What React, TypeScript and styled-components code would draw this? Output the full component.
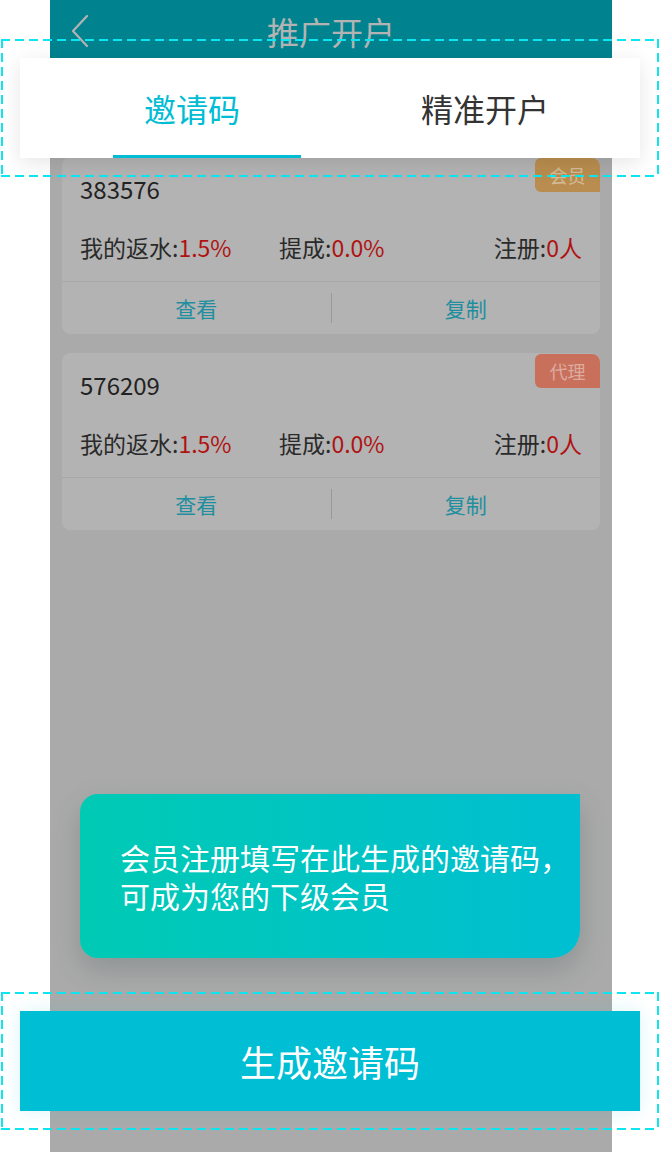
import React from "react";
import styled, { createGlobalStyle } from "styled-components";

const GlobalStyle = createGlobalStyle`
  html, body { margin: 0; padding: 0; background: #ffffff; }
  body { font-family: "Noto Sans CJK SC", "Noto Sans", sans-serif; }
  * { box-sizing: border-box; }
`;

const DASH = "#0de6f0";

const Stage = styled.div`
  position: relative;
  width: 660px;
  height: 1152px;
  overflow: hidden;
  background: #ffffff;
`;

const Screen = styled.div`
  margin-left: 50px;
  width: 562px;
  height: 100%;
  background: #aaaaaa;
  display: flex;
  flex-direction: column;
`;

const Header = styled.header`
  flex: none;
  height: 58px;
  padding-top: 3px;
  background: #00838f;
  display: grid;
  grid-template-columns: 1fr auto 1fr;
  align-items: center;
`;

const BackButton = styled.button`
  justify-self: start;
  margin-left: 20px;
  padding: 0;
  border: 0;
  background: none;
  width: 20px;
  height: 34px;
  display: flex;
`;

const Title = styled.h1`
  margin: 0;
  font-size: 32px;
  font-weight: 400;
  line-height: 52px;
  color: #b3b3b3;
`;

const CardList = styled.main`
  margin-top: 99px;
  padding: 0 12px;
  display: flex;
  flex-direction: column;
  gap: 19px;
`;

const Card = styled.article`
  position: relative;
  background: #b3b3b3;
  border-radius: 8px;
  overflow: hidden;
`;

const Badge = styled.span<{ $tone: "member" | "agent" }>`
  position: absolute;
  top: 1px;
  right: 0;
  width: 65px;
  height: 34px;
  border-radius: 6px 8px 0 6px;
  background: ${(p) => (p.$tone === "member" ? "#b98d4f" : "#c8705c")};
  color: rgba(255, 255, 255, 0.42);
  font-size: 18px;
  line-height: 34px;
  text-align: center;
`;

const CardInfo = styled.div`
  padding: 17px 18px 19px;
  display: flex;
  flex-direction: column;
  gap: 28px;
`;

const Code = styled.div`
  font-size: 24px;
  line-height: 30px;
  color: #222222;
`;

const Stats = styled.div`
  display: flex;
  font-size: 23px;
  line-height: 30px;
  color: #2a2a2a;
`;

const Stat = styled.span<{ $width?: number; $end?: boolean }>`
  flex: ${(p) => (p.$width ? `0 0 ${p.$width}px` : "none")};
  margin-left: ${(p) => (p.$end ? "auto" : "0")};
  white-space: nowrap;
`;

const Value = styled.span`
  color: #b01212;
`;

const Actions = styled.div`
  height: 53px;
  border-top: 1px solid #a8a8a8;
  display: grid;
  grid-template-columns: 1fr 1px 1fr;
  align-items: center;
`;

const ActionButton = styled.button`
  padding: 0;
  border: 0;
  background: none;
  font-family: inherit;
  font-size: 21px;
  color: #1f8e9e;
  text-align: center;
`;

const ActionDivider = styled.span`
  width: 1px;
  height: 30px;
  background: #999999;
`;

const HighlightFrame = styled.div<{ $top: number }>`
  position: absolute;
  left: 1px;
  right: 1px;
  top: ${(p) => p.$top}px;
  padding: 19px;
  background:
    repeating-linear-gradient(90deg, ${DASH} 0 9px, transparent 9px 14px) top left / 100% 2px no-repeat,
    repeating-linear-gradient(90deg, ${DASH} 0 9px, transparent 9px 14px) bottom left / 100% 2px no-repeat,
    repeating-linear-gradient(180deg, ${DASH} 0 9px, transparent 9px 14px) top left / 2px 100% no-repeat,
    repeating-linear-gradient(180deg, ${DASH} 0 9px, transparent 9px 14px) top right / 2px 100% no-repeat;
`;

const TabBar = styled.nav`
  height: 100px;
  background: #ffffff;
  display: grid;
  grid-template-columns: 1fr 1fr;
  box-shadow: 0 5px 20px rgba(0, 0, 0, 0.1);
`;

const Tab = styled.div<{ $active?: boolean }>`
  position: relative;
  display: flex;
  align-items: center;
  justify-content: center;
  padding-left: ${(p) => (p.$active ? "34px" : "0")};
  font-size: 32px;
  color: ${(p) => (p.$active ? "#00bcd4" : "#333333")};

  &::after {
    content: "";
    display: ${(p) => (p.$active ? "block" : "none")};
    position: absolute;
    left: 93px;
    bottom: 0;
    width: 188px;
    height: 3px;
    background: #00bcd4;
  }
`;

const Bubble = styled.aside`
  position: absolute;
  left: 80px;
  top: 794px;
  width: 500px;
  padding: 44px 0 44px 40px;
  border-radius: 18px 0 28px 18px;
  background: linear-gradient(90deg, #00cab4 0%, #00bfd1 100%);
  box-shadow: 0 12px 28px rgba(40, 70, 70, 0.22);
  color: #ffffff;
  font-size: 30px;
  line-height: 38px;
`;

const PrimaryButton = styled.button`
  display: block;
  width: 100%;
  height: 100px;
  border: 0;
  padding: 0;
  background: #00bed4;
  color: #ffffff;
  font-family: inherit;
  font-size: 36px;
  box-shadow: 0 0 18px rgba(0, 190, 212, 0.15);
`;

type Invite = { code: string; kind: "member" | "agent" };

const invites: Invite[] = [
  { code: "383576", kind: "member" },
  { code: "576209", kind: "agent" },
];

export default function App() {
  return (
    <>
      <GlobalStyle />
      <Stage>
        <Screen>
          <Header>
            <BackButton aria-label="返回">
              <svg width="20" height="34" viewBox="0 0 20 34">
                <path d="M17 2 L3 17 L17 32" fill="none" stroke="#b3b3b3" strokeWidth="2.2" strokeLinecap="round" strokeLinejoin="round" />
              </svg>
            </BackButton>
            <Title>推广开户</Title>
          </Header>
          <CardList>
            {invites.map((inv) => (
              <Card key={inv.code}>
                <Badge $tone={inv.kind}>{inv.kind === "member" ? "会员" : "代理"}</Badge>
                <CardInfo>
                  <Code>{inv.code}</Code>
                  <Stats>
                    <Stat $width={199}>
                      我的返水:<Value>1.5%</Value>
                    </Stat>
                    <Stat>
                      提成:<Value>0.0%</Value>
                    </Stat>
                    <Stat $end>
                      注册:<Value>0人</Value>
                    </Stat>
                  </Stats>
                </CardInfo>
                <Actions>
                  <ActionButton>查看</ActionButton>
                  <ActionDivider />
                  <ActionButton>复制</ActionButton>
                </Actions>
              </Card>
            ))}
          </CardList>
        </Screen>

        <HighlightFrame $top={39}>
          <TabBar>
            <Tab $active>邀请码</Tab>
            <Tab>精准开户</Tab>
          </TabBar>
        </HighlightFrame>

        <Bubble>会员注册填写在此生成的邀请码，可成为您的下级会员</Bubble>

        <HighlightFrame $top={992}>
          <PrimaryButton>生成邀请码</PrimaryButton>
        </HighlightFrame>
      </Stage>
    </>
  );
}
